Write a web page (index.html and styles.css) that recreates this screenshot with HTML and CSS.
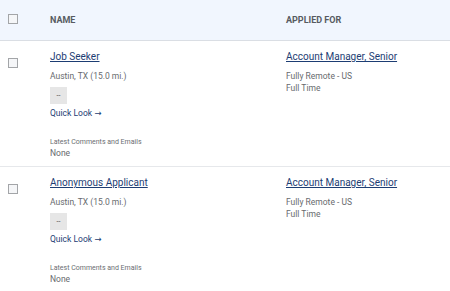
FILE: index.html
```html
<!DOCTYPE html>
<html lang="en">
<head>
    <meta charset="UTF-8">
    <meta name="viewport" content="width=device-width, initial-scale=1.0">
    <title>Applicants</title>
    <link rel="stylesheet" href="styles.css">
</head>
<body>

    <div class="list">
        <div class="row head-row">
            <div class="col-check"><span class="check"></span></div>
            <div class="col-name head-label">NAME</div>
            <div class="col-job head-label">APPLIED FOR</div>
        </div>

        <div class="row item-row">
            <div class="col-check"><span class="check"></span></div>
            <div class="col-name">
                <a href="#" class="name-link">Job Seeker</a>
                <p class="meta">Austin, TX (15.0 mi.)</p>
                <button class="dash-btn">--</button>
                <a href="#" class="quick-look">Quick Look <span class="arrow">&rarr;</span></a>
                <p class="comments-label">Latest Comments and Emails</p>
                <p class="comments-value">None</p>
            </div>
            <div class="col-job">
                <a href="#" class="name-link">Account Manager, Senior</a>
                <p class="meta">Fully Remote - US</p>
                <p class="meta">Full Time</p>
            </div>
        </div>

        <div class="row item-row">
            <div class="col-check"><span class="check"></span></div>
            <div class="col-name">
                <a href="#" class="name-link">Anonymous Applicant</a>
                <p class="meta">Austin, TX (15.0 mi.)</p>
                <button class="dash-btn">--</button>
                <a href="#" class="quick-look">Quick Look <span class="arrow">&rarr;</span></a>
                <p class="comments-label">Latest Comments and Emails</p>
                <p class="comments-value">None</p>
            </div>
            <div class="col-job">
                <a href="#" class="name-link">Account Manager, Senior</a>
                <p class="meta">Fully Remote - US</p>
                <p class="meta">Full Time</p>
            </div>
        </div>
    </div>

</body>
</html>
```

FILE: styles.css
```css
body{
    margin: 0;
    background-color: white;
    font-family: Roboto, "Liberation Sans", sans-serif;
}
p{
    margin: 0;
}

.row{
    display: flex;
    align-items: flex-start;
}
.head-row{
    height: 41px;
    box-sizing: border-box;
    padding-top: 14px;
    background-color: #f1f6fe;
    border-bottom: 1px solid #dadee4;
}
.item-row{
    height: 126px;
    box-sizing: border-box;
    padding-top: 10px;
    border-bottom: 1px solid #e6e8eb;
}

.col-check{
    width: 50px;
    padding-left: 8px;
    box-sizing: border-box;
}
.col-name{
    width: 236px;
    display: flex;
    flex-direction: column;
    align-items: start;
}
.col-job{
    flex: 1;
    display: flex;
    flex-direction: column;
    align-items: start;
}

.check{
    display: block;
    width: 8px;
    height: 8px;
    border: 1px solid #a3a5a8;
    background-color: #f5f6f8;
}
.item-row .check{
    margin-top: 7px;
}

.head-label{
    font-size: 9px;
    line-height: 12px;
    font-weight: bold;
    color: #575b61;
}

.name-link{
    font-size: 10px;
    line-height: 12px;
    color: #1d3d73;
    margin-bottom: 7px;
}
.meta{
    font-size: 8.5px;
    line-height: 12px;
    color: #676a6e;
}
.dash-btn{
    margin-top: 5px;
    width: 17px;
    height: 17px;
    padding: 0;
    border: none;
    background-color: #e6e6e6;
    color: #444;
    font-family: inherit;
    font-size: 7px;
}
.quick-look{
    margin-top: 3px;
    font-size: 8.5px;
    line-height: 12px;
    color: #1d3d73;
    text-decoration: none;
}
.arrow{
    font-family: "DejaVu Sans", sans-serif;
    font-size: 8.5px;
}
.comments-label{
    margin-top: 18px;
    font-size: 7px;
    line-height: 10px;
    color: #6b6e72;
}
.comments-value{
    font-size: 8.5px;
    line-height: 12px;
    color: #676a6e;
}
```
